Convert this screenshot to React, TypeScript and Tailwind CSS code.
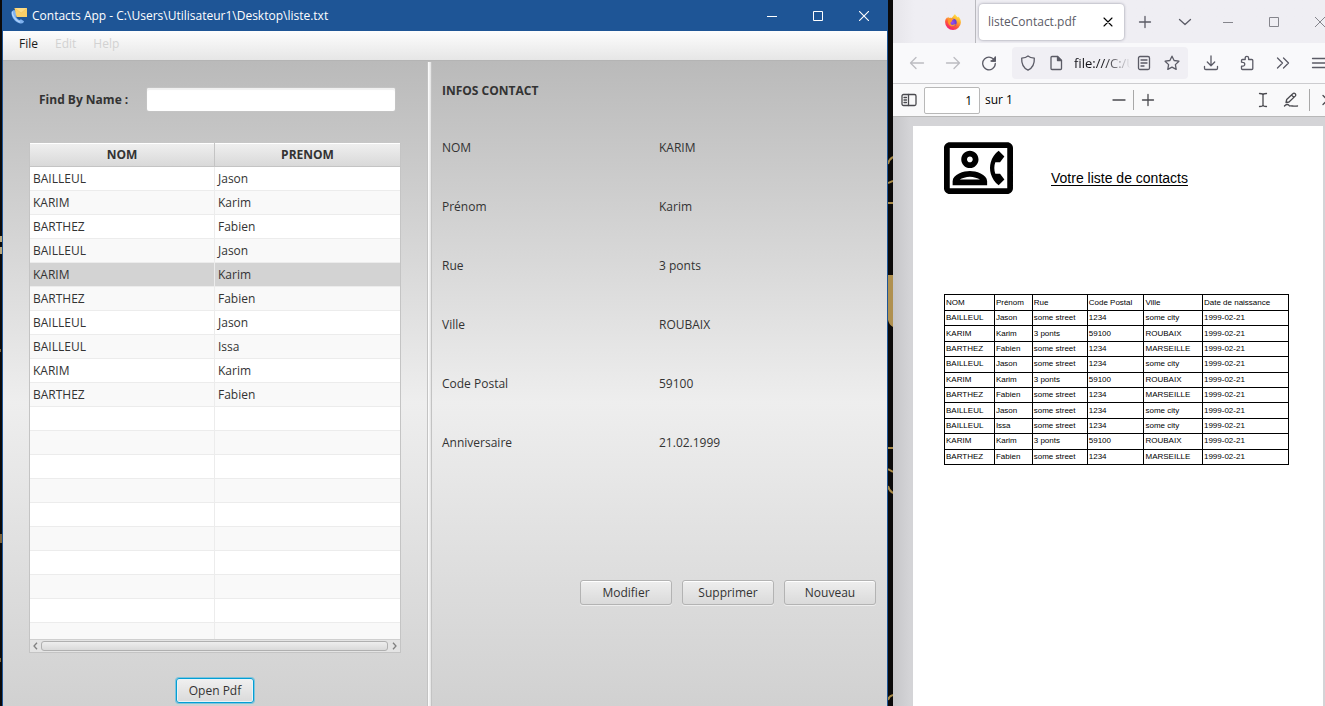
import React from "react";

type Contact = {
  nom: string;
  prenom: string;
  rue: string;
  code: string;
  ville: string;
  date: string;
};

const jason: Contact = { nom: "BAILLEUL", prenom: "Jason", rue: "some street", code: "1234", ville: "some city", date: "1999-02-21" };
const issa: Contact = { ...jason, prenom: "Issa" };
const karim: Contact = { nom: "KARIM", prenom: "Karim", rue: "3 ponts", code: "59100", ville: "ROUBAIX", date: "1999-02-21" };
const fabien: Contact = { nom: "BARTHEZ", prenom: "Fabien", rue: "some street", code: "1234", ville: "MARSEILLE", date: "1999-02-21" };

const contacts: Contact[] = [jason, karim, fabien, jason, karim, fabien, jason, issa, karim, fabien];
const selectedIndex = 4;
const rows: (Contact | null)[] = [...contacts, ...Array<null>(10).fill(null)];

const details: [string, string][] = [
  ["NOM", "KARIM"],
  ["Prénom", "Karim"],
  ["Rue", "3 ponts"],
  ["Ville", "ROUBAIX"],
  ["Code Postal", "59100"],
  ["Anniversaire", "21.02.1999"],
];

function Icon({ children, className = "size-4" }: { children: React.ReactNode; className?: string }) {
  return (
    <svg
      viewBox="0 0 16 16"
      fill="none"
      stroke="currentColor"
      strokeWidth="1.3"
      strokeLinecap="round"
      strokeLinejoin="round"
      aria-hidden="true"
      className={`shrink-0 ${className}`}
    >
      {children}
    </svg>
  );
}

function ToolButton({ label, className = "w-9", children }: { label: string; className?: string; children: React.ReactNode }) {
  return (
    <button type="button" aria-label={label} className={`flex h-8 shrink-0 items-center justify-center ${className}`}>
      {children}
    </button>
  );
}

function AppLogo() {
  return (
    <svg viewBox="0 0 17 16" className="h-4 w-[17px] shrink-0" aria-hidden="true">
      <path d="M2.2 2.2C.6 3.2.2 5 .8 7.300c1 3.700 4 6.900 7.600 8 1.800.5 3.300.2 4.300-1l.3-1-3-2.100-1.700.900C6.500 11.200 5.300 9.600 4.700 8L6 6.300 4 2.200Z" fill="#7fb2ee" />
      <path d="M1.300 3.500C.8 7.500 4.500 12.500 9 14.300" fill="none" stroke="#b4d5fb" strokeWidth="1.200" />
      <path d="M3.500 0H16v9H5.500Z" fill="#fbd068" />
      <path d="M3.500 0H16L10.200 5Z" fill="#fddc85" />
      <path d="m3.500 0 6.700 5L16 0" fill="none" stroke="#f0bd55" strokeWidth=".5" />
    </svg>
  );
}

function FirefoxLogo() {
  return (
    <svg viewBox="0 0 16 16" className="size-4 shrink-0" aria-hidden="true">
      <defs>
        <linearGradient id="fx-body" x1=".8" y1="0" x2=".25" y2="1">
          <stop offset="0" stopColor="#fff04a" />
          <stop offset=".35" stopColor="#ffb02e" />
          <stop offset=".65" stopColor="#ff5b36" />
          <stop offset="1" stopColor="#f0147e" />
        </linearGradient>
        <radialGradient id="fx-globe" cx=".4" cy=".5" r=".6">
          <stop offset="0" stopColor="#a04bf0" />
          <stop offset="1" stopColor="#5a3fd0" />
        </radialGradient>
      </defs>
      <path d="M10 0c.3 1.600 1.800 2.200 3 3.500.3-.3.300-.7.300-1 1.700 1.500 2.600 3.700 2.600 6A7.900 7.900 0 0 1 8 16 7.900 7.900 0 0 1 .1 8.200c0-1.700.5-3.200 1.400-4.700l.3 1.200c.5-.9 1-1.500 1.700-2l.2 1.500c1-.4 1.900-.5 3-.2C7.700 2.800 9 1.500 10 0Z" fill="url(#fx-body)" />
      <circle cx="8" cy="8.500" r="3.700" fill="url(#fx-globe)" />
      <path d="M3.700 4.200c1.200-.4 2.300-.2 3 .5l2 .3c-.2 1-1.500 1.200-1.700 1.700.2 1-.9 1-1.400 1.800-.5 1.500.7 2.500 2 2.400 1.300-.1 1.800-1 3.300-.7-1 1.800-3.400 2.500-5.200 1.700-2-.9-3.700-3.700-2-7.700Z" fill="#ff9a2b" />
    </svg>
  );
}

function ContactPhoneIcon() {
  return (
    <svg viewBox="0 3 24 18" className="h-[52px] w-[69px] shrink-0" fill="#000" aria-hidden="true">
      <path d="M22 3H2C.9 3 0 3.900 0 5v14c0 1.100.9 2 2 2h20c1.100 0 1.990-.9 1.990-2L24 5c0-1.100-.9-2-2-2zm0 16H2V5h20v14zm-2.990-1.010L21 16l-1.510-2h-1.640c-.22-.63-.35-1.300-.35-2s.13-1.370.35-2h1.640L21 8l-1.990-1.990c-1.310.98-2.280 2.370-2.730 3.990-.18.64-.28 1.310-.28 2s.1 1.360.28 2c.45 1.610 1.420 3.010 2.730 3.990zM9 12c1.650 0 3-1.350 3-3s-1.350-3-3-3-3 1.350-3 3 1.350 3 3 3zm0-4c.55 0 1 .45 1 1s-.45 1-1 1-1-.45-1-1 .45-1 1-1zm6 8.590c0-2.500-3.970-3.580-6-3.580s-6 1.080-6 3.580V18h12v-1.410zM5.480 16c.74-.5 2.220-1 3.520-1s2.770.49 3.520 1H5.480z" />
    </svg>
  );
}

function FxButton({ children, focused = false }: { children: React.ReactNode; focused?: boolean }) {
  return (
    <button
      type="button"
      className={
        focused
          ? "h-[25px] rounded-[3px] border border-[#039ed3] bg-linear-to-b from-[#f0f0f0] to-[#dadada] px-3 leading-4 shadow-[0_0_0_1px_#7cc4de,inset_0_0_0_1px_#e9f3f7]"
          : "h-[25px] w-[92px] rounded-[3px] border border-[#b3b3b3] bg-linear-to-b from-[#eeeeee] to-[#dadada] leading-4 shadow-[inset_0_1px_0_#ffffff,0_1px_0_#eeeeee]"
      }
    >
      {children}
    </button>
  );
}

function ContactsTable() {
  return (
    <div className="flex min-h-0 flex-1 flex-col border border-t-0 border-[#c4c4c4]">
      <div className="min-h-0 flex-1 overflow-hidden bg-white">
        <table className="w-full table-fixed border-separate border-spacing-0">
          <thead>
            <tr className="h-6">
              <th className="border-r border-b border-[#c4c4c4] bg-linear-to-b from-[#f0f0f0] to-[#d9d9d9] p-0 pt-px font-bold shadow-[inset_0_1px_0_#ffffff]">NOM</th>
              <th className="border-b border-[#c4c4c4] bg-linear-to-b from-[#f0f0f0] to-[#d9d9d9] p-0 pt-px font-bold shadow-[inset_0_1px_0_#ffffff]">PRENOM</th>
            </tr>
          </thead>
          <tbody>
            {rows.map((row, i) => (
              <tr key={i} className={`h-6 ${i === selectedIndex ? "bg-[#d3d3d3]" : i % 2 ? "bg-[#f9f9f9]" : "bg-white"}`}>
                <td className="border-r border-b border-[#ececec] py-0 pl-[3px]">{row?.nom}</td>
                <td className="border-b border-[#ececec] py-0 pl-[3px]">{row?.prenom}</td>
              </tr>
            ))}
          </tbody>
        </table>
      </div>
      <div className="flex h-[13px] shrink-0 items-center border-t border-[#cfcfcf] bg-[#e4e4e4] text-[#808080]">
        <button type="button" aria-label="Scroll left" className="flex w-[11px] justify-center">
          <svg viewBox="0 0 5 8" className="h-2 w-[5px]" fill="none" stroke="currentColor" strokeWidth="1.3"><path d="M4 .7 1 4l3 3.300" /></svg>
        </button>
        <div className="h-[10px] flex-1 rounded-[3px] border border-[#b0b0b0] bg-linear-to-b from-[#eeeeee] to-[#dadada]" />
        <button type="button" aria-label="Scroll right" className="flex w-3 justify-center">
          <svg viewBox="0 0 5 8" className="h-2 w-[5px]" fill="none" stroke="currentColor" strokeWidth="1.3"><path d="m1 .7 3 3.300-3 3.300" /></svg>
        </button>
      </div>
    </div>
  );
}

function ContactsWindow() {
  return (
    <section className="flex min-w-0 flex-col border-x border-[#1e5596] text-[12px] leading-4 text-[#333333]">
      <header className="flex h-[31px] shrink-0 items-center bg-[#1e5596] text-white">
        <div className="flex flex-1 items-center gap-1 pl-2">
          <AppLogo />
          <h1>Contacts App - C:\Users\Utilisateur1\Desktop\liste.txt</h1>
        </div>
        <ToolButton label="Minimize" className="w-[46px]">
          <svg viewBox="0 0 10 10" className="size-[10px]" stroke="#fff" shapeRendering="crispEdges"><path d="M0 5.500h10" /></svg>
        </ToolButton>
        <ToolButton label="Maximize" className="w-[46px]">
          <svg viewBox="0 0 10 10" className="size-[10px]" fill="none" stroke="#fff"><path d="M.5.500h9v9h-9Z" /></svg>
        </ToolButton>
        <ToolButton label="Close" className="w-[46px]">
          <svg viewBox="0 0 10 10" className="size-[10px]" stroke="#fff" strokeWidth="1.100"><path d="m0 0 10 10M10 0 0 10" /></svg>
        </ToolButton>
      </header>
      <nav className="flex h-[30px] shrink-0 items-center gap-[17px] border-b border-[#b4b4b4] bg-linear-to-b from-[#fdfdfd] to-[#e6e6e6] px-4 pb-[3px]">
        <button type="button" className="text-[#1a1a1a]">File</button>
        <button type="button" disabled className="text-[#d2d2d2]">Edit</button>
        <button type="button" disabled className="text-[#d2d2d2]">Help</button>
      </nav>
      <div className="grid min-h-0 flex-1 grid-cols-[424fr_5px_455fr] grid-rows-[minmax(0,1fr)] bg-linear-to-b from-[#bababa] via-[#eeeeee] via-53% to-[#d1d1d1]">
        <div className="flex min-w-0 flex-col px-[26px] pt-[27px] pb-[3px]">
          <div className="flex items-center pr-[6px] pl-[10px]">
            <label htmlFor="find" className="w-[108px] shrink-0 font-bold">Find By Name :</label>
            <input id="find" type="text" className="h-[23px] min-w-0 flex-1 rounded-[2px] bg-white px-2 shadow-[inset_0_2px_1px_#f0f0f0,0_0_0_1px_#c4c4c4] outline-none" />
          </div>
          <div className="mt-8 flex min-h-0 flex-1 flex-col">
            <ContactsTable />
          </div>
          <div className="mt-[25px] flex justify-center">
            <FxButton focused>Open Pdf</FxButton>
          </div>
        </div>
        <div className="mt-px border-x border-[#c3c3c3] bg-linear-to-r from-[#ffffff] to-[#e2e2e2]" />
        <div className="flex min-w-0 flex-col pr-[11px] pl-[10px]">
          <h2 className="mt-[22px] font-bold">INFOS CONTACT</h2>
          <dl className="mt-[19px]">
            {details.map(([label, value]) => (
              <div key={label} className="grid h-[59px] grid-cols-[50%_1fr] items-center">
                <dt>{label}</dt>
                <dd>{value}</dd>
              </div>
            ))}
          </dl>
          <div className="mt-[108px] flex justify-end gap-[10px]">
            <FxButton>Modifier</FxButton>
            <FxButton>Supprimer</FxButton>
            <FxButton>Nouveau</FxButton>
          </div>
        </div>
      </div>
    </section>
  );
}

function BrowserWindow() {
  return (
    <section className="flex min-w-0 flex-col overflow-hidden bg-[#f9f9fb] text-[12px] leading-4 text-[#5b5b66]">
      <div className="flex h-[43px] shrink-0 items-center overflow-hidden bg-[#efeef3] bg-linear-to-r from-[#e6e5ea] to-[#efeef3] to-5%">
        <div className="flex h-full w-[83px] shrink-0 items-center justify-end border-r border-[#b9b9be] pr-[14px]">
          <FirefoxLogo />
        </div>
        <div className="ml-[3px] flex h-9 w-[145px] shrink-0 items-center justify-between rounded bg-white pr-2 pl-[9px] shadow-[0_0_3px_#8f8f9d]">
          <span className="text-[#5b5b66]">listeContact.pdf</span>
          <button type="button" aria-label="Close tab" className="flex size-4 items-center justify-center text-black">
            <Icon className="size-4"><path d="m4 4 8 8M12 4l-8 8" strokeWidth="1.100" /></Icon>
          </button>
        </div>
        <ToolButton label="New tab" className="w-[42px]">
          <Icon><path d="M8 2.500v11M2.500 8h11" /></Icon>
        </ToolButton>
        <ToolButton label="List all tabs" className="w-[38px]">
          <Icon><path d="m2.500 5.500 5.500 5 5.500-5" /></Icon>
        </ToolButton>
        <div className="ml-px flex min-w-0 flex-1 overflow-hidden text-[#85858c]">
          <ToolButton label="Minimize window" className="w-[46px]">
            <svg viewBox="0 0 10 10" className="size-[10px]" stroke="currentColor" shapeRendering="crispEdges"><path d="M0 5.500h10" /></svg>
          </ToolButton>
          <ToolButton label="Maximize window" className="w-[46px]">
            <svg viewBox="0 0 10 10" className="size-[10px]" fill="none" stroke="currentColor"><path d="M.5.500h9v9h-9Z" /></svg>
          </ToolButton>
          <ToolButton label="Close window" className="w-[46px]">
            <svg viewBox="0 0 10 10" className="size-[10px]" stroke="currentColor"><path d="m0 0 10 10M10 0 0 10" /></svg>
          </ToolButton>
        </div>
      </div>

      <div className="flex h-[41px] shrink-0 items-center overflow-hidden border-b border-[#cccccf] pl-[6px]">
        <div className="flex shrink-0 text-[#bcbcc1]">
          <ToolButton label="Back"><Icon><path d="M14.500 8H1.500M7 2.500 1.500 8 7 13.500" /></Icon></ToolButton>
          <ToolButton label="Forward"><Icon><path d="M1.500 8h13M9 2.500 14.500 8 9 13.500" /></Icon></ToolButton>
        </div>
        <ToolButton label="Reload" className="w-9">
          <Icon><path d="M13.800 6A6.300 6.300 0 1 0 14.300 8.500M14.300 1.800V6H10" /><path d="M14.300 2.500V6h-3.500Z" fill="currentColor" /></Icon>
        </ToolButton>
        <div className="ml-[5px] flex h-8 min-w-0 flex-1 items-center rounded bg-[#f0eff4] px-2">
          <Icon><path d="M8 1c1.500 1.300 3.700 2 6.300 2.200.3 5.300-1.300 9.500-6.300 12C3 12.700 1.400 8.500 1.700 3.200 4.300 3 6.500 2.300 8 1Z" /></Icon>
          <Icon className="ml-3 size-4"><path d="M3 2.500c0-.6.400-1 1-1h5.500l4 4v8c0 .6-.4 1-1 1H4c-.6 0-1-.4-1-1Z" /><path d="M9.500 1.500v4h4Z" fill="currentColor" /></Icon>
          <input
            aria-label="Address"
            type="text"
            readOnly
            value="file:///C:/Users"
            className="ml-[10px] w-14 min-w-0 flex-1 bg-transparent text-[13px] text-[#15141a] outline-none [mask-image:linear-gradient(to_right,black_50%,transparent_98%)]"
          />
          <Icon className="mr-3 ml-1 size-4"><rect x="2.500" y="1.500" width="11" height="13" rx="1.500" /><path d="M5 5h6M5 8h6M5 11h3" /></Icon>
          <Icon><path d="m8 1.200 2.100 4.300 4.800.7-3.500 3.400.8 4.800L8 12.200l-4.200 2.200.8-4.800L1.100 6.200l4.800-.7Z" /></Icon>
        </div>
        <div className="flex w-[137px] shrink-0 overflow-hidden pl-[5px]">
          <ToolButton label="Downloads"><Icon><path d="M8 1v9.500M4.300 7 8 10.700 11.700 7M1.500 11.500v1.700c0 .8.600 1.300 1.300 1.300h10.400c.7 0 1.300-.5 1.300-1.300v-1.700" /></Icon></ToolButton>
          <ToolButton label="Extensions"><Icon><path d="M2.500 7.200V5.500c0-.6.400-1 1-1h2.700V3a1.700 1.700 0 0 1 3.400 0v1.500h3.200c.6 0 1 .4 1 1v8c0 .6-.4 1-1 1H3.500c-.6 0-1-.4-1-1v-2.300h1.300a1.900 1.900 0 0 0 0-3.900Z" /></Icon></ToolButton>
          <ToolButton label="More tools"><Icon><path d="m2.500 3 5 5-5 5M8.500 3l5 5-5 5" /></Icon></ToolButton>
          <ToolButton label="Open menu"><Icon><path d="M1.500 3.500h13M1.500 8h13M1.500 12.500h13" /></Icon></ToolButton>
        </div>
      </div>

      <div className="flex h-[33px] shrink-0 items-center overflow-hidden border-b border-[#b8b8b8] bg-[#f9f9fa] text-[#4a4a4f]">
        <ToolButton label="Toggle sidebar" className="w-[31px]">
          <Icon><rect x="1" y="2.500" width="14" height="11" rx="1.500" /><path d="M7.500 2.500v11M3 5.500h2.500M3 8h2.500M3 10.500h2.500" /></Icon>
        </ToolButton>
        <input id="page" type="text" defaultValue="1" aria-label="Page" className="h-[27px] w-14 shrink-0 rounded-[2px] border border-[#b8b8b8] bg-white pr-[7px] text-right text-black outline-none" />
        <label htmlFor="page" className="ml-[5px] shrink-0 text-black">sur 1</label>
        <div className="flex min-w-0 flex-1 items-center justify-end">
          <ToolButton label="Zoom out" className="w-7"><Icon><path d="M2 8h12" /></Icon></ToolButton>
          <span className="h-5 w-px bg-[#a8a8a8]" />
          <ToolButton label="Zoom in" className="w-7"><Icon><path d="M8 2.500v11M2.500 8h11" /></Icon></ToolButton>
        </div>
        <div className="ml-[87px] flex w-[76px] shrink-0 items-center overflow-hidden">
          <ToolButton label="Text" className="w-7"><Icon><path d="M4.500 1.500C6 1.500 8 1.700 8 3v10c0 1.300-2 1.500-3.500 1.500M11.500 1.500C10 1.500 8 1.700 8 3M8 13c0 1.300 2 1.500 3.500 1.500" /></Icon></ToolButton>
          <ToolButton label="Draw" className="w-7"><Icon><path d="m3 10.500.7-3L9.800 1.700c.7-.7 1.700-.7 2.400 0s.7 1.700 0 2.400L6 10Zm5.500-7.500 2.400 2.400M1.500 14c2-2.500 4-1.500 5 0 2-.7 4 .8 8 0" /></Icon></ToolButton>
          <span className="mx-1 h-[22px] w-px shrink-0 bg-[#a8a8a8]" />
          <ToolButton label="Tools" className="w-7"><Icon><path d="m3 3.500 4.500 4.500L3 12.500M8.500 3.500 13 8l-4.500 4.500" /></Icon></ToolButton>
        </div>
      </div>

      <div className="flex min-h-0 flex-1 flex-col overflow-hidden bg-[#d4d4d7] bg-linear-to-r from-[#c6c6c9] to-[#d4d4d7] to-4% pt-[9px] pr-[2px] pl-5">
        <article className="flex-1 bg-white pt-4 pr-[34px] pl-[31px] font-['Liberation_Sans',sans-serif] text-black">
          <div className="flex items-end gap-[38px]">
            <ContactPhoneIcon />
            <h2 className="pb-2 text-[14px] leading-4 underline underline-offset-2">Votre liste de contacts</h2>
          </div>
          <table className="mt-[100px] h-[171px] w-full table-fixed border-collapse text-left text-[8px] leading-[10px]">
            <colgroup>
              <col className="w-[14.5%]" />
              <col className="w-[11%]" />
              <col className="w-[16%]" />
              <col className="w-[16.5%]" />
              <col className="w-[17%]" />
              <col className="w-[25%]" />
            </colgroup>
            <thead>
              <tr className="h-4">
                {["NOM", "Prénom", "Rue", "Code Postal", "Ville", "Date de naissance"].map((h) => (
                  <th key={h} className="border border-black p-0 pl-px font-normal whitespace-nowrap">{h}</th>
                ))}
              </tr>
            </thead>
            <tbody>
              {contacts.map((c, i) => (
                <tr key={i}>
                  {[c.nom, c.prenom, c.rue, c.code, c.ville, c.date].map((value, j) => (
                    <td key={j} className="border border-black p-0 pl-px whitespace-nowrap">{value}</td>
                  ))}
                </tr>
              ))}
            </tbody>
          </table>
        </article>
      </div>
    </section>
  );
}

export default function App() {
  return (
    <main className="grid h-screen grid-cols-[2px_886fr_5px_432fr] grid-rows-[minmax(0,1fr)] overflow-hidden bg-[#0b0a0a] font-['Open_Sans',sans-serif]">
      <svg viewBox="0 0 2 706" preserveAspectRatio="none" className="h-full w-[2px]" aria-hidden="true">
        <path d="M0 236h2v6H0ZM0 247h2v7H0Z" fill="#b9a77c" />
        <path d="M0 349h1v3H0ZM0 534h2v9H0ZM0 658h1v4H0Z" fill="#7d6238" />
      </svg>
      <ContactsWindow />
      <svg viewBox="0 0 5 706" preserveAspectRatio="none" className="h-full w-[5px]" fill="none" stroke="#a88a48" strokeWidth="2" aria-hidden="true">
        <path d="M0 164q1-5 5-7M0 183l5-2M0 203h5M0 448h5M0 469l5 3M0 486q1 5 5 7M0 700q1-4 5-5" />
        <path d="M0 275h5v52q-4-2-5-7Z" fill="#b09150" stroke="none" />
      </svg>
      <BrowserWindow />
    </main>
  );
}
